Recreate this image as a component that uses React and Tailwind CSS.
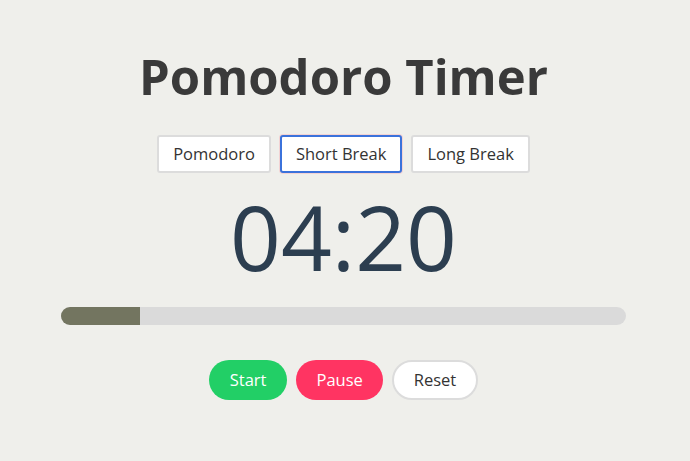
import { useState } from 'react';

export default function App() {
  const [mode, setMode] = useState('short');
  const modes = [
    { id: 'pomodoro', label: 'Pomodoro' },
    { id: 'short', label: 'Short Break' },
    { id: 'long', label: 'Long Break' },
  ];
  const progress = 14;

  return (
    <div className="min-h-screen bg-[#efefeb] font-['Open_Sans',sans-serif]">
      <div className="flex flex-col items-center pl-[61px] pr-[64px] pt-[44px]">
        <h1 className="text-[49px] leading-[64px] font-bold text-[#3a3a3a]">Pomodoro Timer</h1>

        <div className="mt-[27px] flex gap-[9px]">
          {modes.map((m) => (
            <button
              key={m.id}
              onClick={() => setMode(m.id)}
              className={`h-[38px] px-[14px] rounded-[3px] bg-white text-[16.5px] text-[#333] border-2 ${
                mode === m.id ? 'border-[#3b72db] ring-1 ring-[#f3d3d3]' : 'border-[#dcdcdc]'
              }`}
            >
              {m.label}
            </button>
          ))}
        </div>

        <div className="mt-[14px] text-[89px] leading-[100px] text-[#2c3e50]">04:20</div>

        <div className="mt-[20px] h-[18px] w-full rounded-full bg-[#dadada] overflow-hidden">
          <div className="h-full bg-[#737560]" style={{ width: `${progress}%` }} />
        </div>

        <div className="mt-[35px] flex gap-[9px]">
          <button className="h-[40px] px-[21px] rounded-full bg-[#22cf66] text-white text-[16.5px]">Start</button>
          <button className="h-[40px] px-[20px] rounded-full bg-[#ff3462] text-white text-[16.5px]">Pause</button>
          <button className="h-[40px] px-[20px] rounded-full bg-white border-2 border-[#dcdcdc] text-[#333] text-[16.5px]">Reset</button>
        </div>
      </div>
    </div>
  );
}
